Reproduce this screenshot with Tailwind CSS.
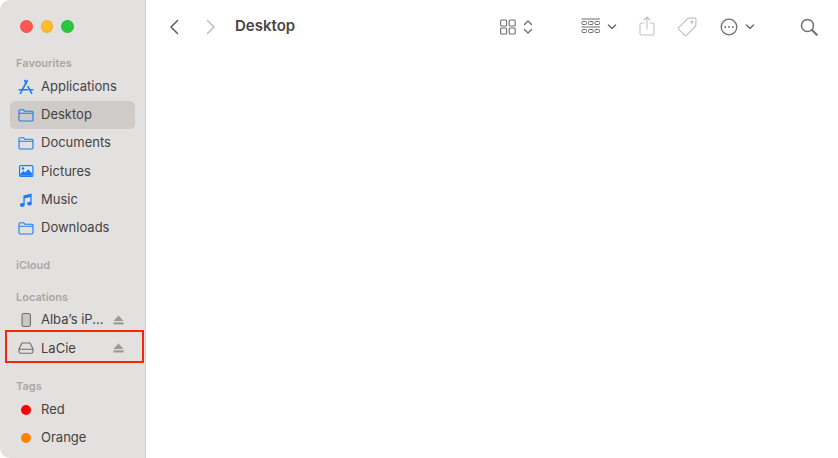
<!doctype html>
<html><head><meta charset="utf-8"><script src="https://cdn.jsdelivr.net/npm/@tailwindcss/browser@4"></script></head>
<body class="bg-white">
<div class="relative flex h-[458px] w-[838px] overflow-hidden bg-white font-['Inter',sans-serif] text-[#444241]">
  <aside class="flex h-full w-[146px] shrink-0 flex-col rounded-l-[10px] border-r border-[#d2d0ce] bg-[#e3e1df] px-[10px]">
    <div class="flex gap-[8px] pl-[10px] pt-[20px]">
      <span class="size-[12.5px] rounded-full bg-[#fc5753] border border-[#e0443e]/40"></span>
      <span class="size-[12.5px] rounded-full bg-[#fdbc2e] border border-[#dea123]/40"></span>
      <span class="size-[12.5px] rounded-full bg-[#28c840] border border-[#1aab29]/40"></span>
    </div>
    <div class="mt-[23px] flex h-[16px] items-center pl-[6px] text-[11px] font-semibold text-[#a9a7a5]">Favourites</div>
    <div class="mt-[1px] flex flex-col text-[13px]">
      <div class="flex h-[28.25px] items-center gap-[7px] pl-[8px]">
        <svg class="size-[16px] shrink-0" viewBox="0 0 16 16" fill="none" stroke="#1b7cf5" stroke-width="1.6" stroke-linecap="round"><path d="M9.3 1.5 3.6 12.2M6.7 1.5l1.6 3M10 7.6l2.4 4.6M1.2 10.7h8.4M11.3 10.7h3.5M2.4 14.3l1.2-2.1M12.4 12.2l1.2 2.1"/></svg>
        <span>Applications</span>
      </div>
      <div class="flex h-[28.25px] items-center gap-[7px] rounded-[5px] bg-[#cfcbc8] pl-[8px]">
        <svg class="size-[16px] shrink-0" viewBox="0 0 16 16" fill="none" stroke="#1b7cf5" stroke-width="1.1"><path d="M1 4a1.2 1.2 0 0 1 1.2-1.2h3.3l1.4 1.4h6.9A1.2 1.2 0 0 1 15 5.4v7.4a1.2 1.2 0 0 1-1.2 1.2H2.2A1.2 1.2 0 0 1 1 12.8zM1 6.2h14"/></svg>
        <span>Desktop</span>
      </div>
      <div class="flex h-[28.25px] items-center gap-[7px] pl-[8px]">
        <svg class="size-[16px] shrink-0" viewBox="0 0 16 16" fill="none" stroke="#1b7cf5" stroke-width="1.1"><path d="M1 4a1.2 1.2 0 0 1 1.2-1.2h3.3l1.4 1.4h6.9A1.2 1.2 0 0 1 15 5.4v7.4a1.2 1.2 0 0 1-1.2 1.2H2.2A1.2 1.2 0 0 1 1 12.8zM1 6.2h14"/></svg>
        <span>Documents</span>
      </div>
      <div class="flex h-[28.25px] items-center gap-[7px] pl-[8px]">
        <svg class="size-[16px] shrink-0" viewBox="0 0 16 16"><rect x="1" y="2" width="14.5" height="12" rx="1.5" fill="#1b7cf5"/><rect x="2.2" y="3.2" width="12.1" height="9.6" fill="#dcebfb"/><circle cx="5" cy="5.6" r="1.3" fill="#1b7cf5"/><path d="M2.2 12.8v-1.8l3-3 2 1.6 3-3.4 4.1 4.6v2z" fill="#1b7cf5"/></svg>
        <span>Pictures</span>
      </div>
      <div class="flex h-[28.25px] items-center gap-[7px] pl-[8px]">
        <svg class="size-[16px] shrink-0" viewBox="0 0 16 16" fill="#1b7cf5"><ellipse cx="4.3" cy="13" rx="2.4" ry="1.9"/><ellipse cx="11.4" cy="11.6" rx="2.4" ry="1.9"/><path d="M5.4 13V3.6L13.6 1.4v10.2h-1.3V5L6.7 6.5V13z"/></svg>
        <span>Music</span>
      </div>
      <div class="flex h-[28.25px] items-center gap-[7px] pl-[8px]">
        <svg class="size-[16px] shrink-0" viewBox="0 0 16 16" fill="none" stroke="#1b7cf5" stroke-width="1.1"><path d="M1 4a1.2 1.2 0 0 1 1.2-1.2h3.3l1.4 1.4h6.9A1.2 1.2 0 0 1 15 5.4v7.4a1.2 1.2 0 0 1-1.2 1.2H2.2A1.2 1.2 0 0 1 1 12.8zM1 6.2h14"/></svg>
        <span>Downloads</span>
      </div>
    </div>
    <div class="mt-[15px] flex h-[16px] items-center pl-[6px] text-[11px] font-semibold text-[#a9a7a5]">iCloud</div>
    <div class="mt-[16px] flex h-[16px] items-center pl-[6px] text-[11px] font-semibold text-[#a9a7a5]">Locations</div>
    <div class="mt-[1px] flex flex-col text-[13px]">
      <div class="flex h-[28.25px] items-center gap-[7px] pl-[8px] pr-[11px]">
        <svg class="size-[16px] shrink-0" viewBox="0 0 16 16" fill="none" stroke="#6f6d6c" stroke-width="1.1"><rect x="4" y="1.5" width="8.4" height="13" rx="1.8" fill="#c9c7c5"/></svg>
        <span class="flex-1">Alba’s iP...</span>
        <svg class="h-[10px] w-[11px] shrink-0" viewBox="0 0 11 10" fill="#9c9a98"><path d="M5.5 0.5 10.5 6H.5z"/><rect x=".5" y="7.3" width="10" height="2.2"/></svg>
      </div>
      <div class="flex h-[28.25px] items-center gap-[7px] pl-[8px] pr-[11px]">
        <svg class="size-[16px] shrink-0" viewBox="0 0 16 16" fill="none" stroke="#6f6d6c" stroke-width="1.1"><path d="M4 3h8l3 6v2.6a1.6 1.6 0 0 1-1.6 1.6H2.6A1.6 1.6 0 0 1 1 11.6V9zM1 9.2h14"/></svg>
        <span class="flex-1">LaCie</span>
        <svg class="h-[10px] w-[11px] shrink-0" viewBox="0 0 11 10" fill="#9c9a98"><path d="M5.5 0.5 10.5 6H.5z"/><rect x=".5" y="7.3" width="10" height="2.2"/></svg>
      </div>
    </div>
    <div class="mt-[16px] flex h-[16px] items-center pl-[6px] text-[11px] font-semibold text-[#a9a7a5]">Tags</div>
    <div class="mt-[1px] flex flex-col text-[13px]">
      <div class="flex h-[28.25px] items-center gap-[10px] pl-[11px]">
        <span class="size-[10px] shrink-0 rounded-full bg-[#fc0006]"></span><span>Red</span>
      </div>
      <div class="flex h-[28.25px] items-center gap-[10px] pl-[11px]">
        <span class="size-[10px] shrink-0 rounded-full bg-[#fd8103]"></span><span>Orange</span>
      </div>
    </div>
  </aside>
  <main class="flex h-[53px] flex-1 items-center pl-[23px] pr-[20px]">
    <svg class="h-[16px] w-[10px] shrink-0" viewBox="0 0 10 16" fill="none" stroke="#5f5d5c" stroke-width="1.5" stroke-linecap="round" stroke-linejoin="round"><path d="M8.5 1.5 2 8l6.5 6.5"/></svg>
    <svg class="ml-[27px] h-[16px] w-[10px] shrink-0" viewBox="0 0 10 16" fill="none" stroke="#bdbcbb" stroke-width="1.5" stroke-linecap="round" stroke-linejoin="round"><path d="M1.5 1.5 8 8l-6.5 6.5"/></svg>
    <span class="ml-[19px] text-[15px] font-semibold text-[#484645]">Desktop</span>
    <div class="ml-auto flex items-center">
      <svg class="h-[16px] w-[16px] shrink-0" viewBox="0 0 16 16" fill="none" stroke="#716f6e" stroke-width="1.1"><rect x=".6" y="1" width="6" height="6" rx="1"/><rect x="9.2" y="1" width="6" height="6" rx="1"/><rect x=".6" y="9" width="6" height="6" rx="1"/><rect x="9.2" y="9" width="6" height="6" rx="1"/></svg>
      <svg class="ml-[7px] h-[16px] w-[10px] shrink-0" viewBox="0 0 10 16" fill="none" stroke="#716f6e" stroke-width="1.4" stroke-linecap="round" stroke-linejoin="round"><path d="M1.5 5.5 5 2l3.5 3.5M1.500 10.500 5 14l3.500-3.500"/></svg>
      <svg class="ml-[48px] h-[18px] w-[20px] shrink-0" viewBox="0 0 20 18" fill="none" stroke="#716f6e" stroke-width="1"><path d="M.5 1h18.5M.5 9h18.5" stroke-width="1.2"/><rect x="1" y="3.5" width="4.5" height="3" rx=".8"/><rect x="7.5" y="3.5" width="4.5" height="3" rx=".8"/><rect x="14" y="3.5" width="4.5" height="3" rx=".8"/><rect x="1" y="11.5" width="4.5" height="3" rx=".8"/><rect x="7.5" y="11.5" width="4.5" height="3" rx=".8"/><rect x="14" y="11.5" width="4.5" height="3" rx=".8"/></svg>
      <svg class="ml-[6px] h-[6px] w-[10px] shrink-0" viewBox="0 0 10 6" fill="none" stroke="#716f6e" stroke-width="1.5" stroke-linecap="round" stroke-linejoin="round"><path d="M1.500 1l3.500 3.500L8.500 1"/></svg>
      <svg class="ml-[22px] h-[21px] w-[16px] shrink-0" viewBox="0 0 16 21" fill="none" stroke="#c2c1c0" stroke-width="1.1" stroke-linecap="round" stroke-linejoin="round"><path d="M5 7H2.500A1.500 1.500 0 0 0 1 8.500v9A1.500 1.500 0 0 0 2.500 19h11a1.500 1.500 0 0 0 1.500-1.500v-9A1.500 1.500 0 0 0 13.500 7H11M8 13V1.500M5 4l3-3 3 3"/></svg>
      <svg class="ml-[21px] size-[22px] shrink-0" viewBox="0 0 22 22" fill="none" stroke="#c2c1c0" stroke-width="1.2" stroke-linejoin="round"><path d="M12.500 2.200 19 2a1 1 0 0 1 1 1l-.2 6.500a1.500 1.500 0 0 1-.5 1L10.700 19.100a1.500 1.500 0 0 1-2.100 0l-5.700-5.700a1.500 1.500 0 0 1 0-2.100l8.600-8.600a1.500 1.500 0 0 1 1-.5z"/><circle cx="16" cy="6" r="1.100"/></svg>
      <svg class="ml-[22px] size-[18px] shrink-0" viewBox="0 0 18 18" fill="none" stroke="#716f6e" stroke-width="1.300"><circle cx="9" cy="9" r="7.800"/><circle cx="5.300" cy="9" r=".9" fill="#716f6e" stroke="none"/><circle cx="9" cy="9" r=".9" fill="#716f6e" stroke="none"/><circle cx="12.700" cy="9" r=".9" fill="#716f6e" stroke="none"/></svg>
      <svg class="ml-[7px] h-[6px] w-[10px] shrink-0" viewBox="0 0 10 6" fill="none" stroke="#716f6e" stroke-width="1.5" stroke-linecap="round" stroke-linejoin="round"><path d="M1.500 1l3.500 3.500L8.500 1"/></svg>
      <svg class="ml-[45px] size-[18px] shrink-0" viewBox="0 0 18 18" fill="none" stroke="#716f6e" stroke-width="1.500" stroke-linecap="round"><circle cx="7.500" cy="7.500" r="6"/><path d="M12 12l4.800 4.800" stroke-width="2"/></svg>
    </div>
  </main>
  <div class="absolute left-[5px] top-[330px] h-[33px] w-[139px] border-2 border-[#f4260c]"></div>
</div>
</body></html>
